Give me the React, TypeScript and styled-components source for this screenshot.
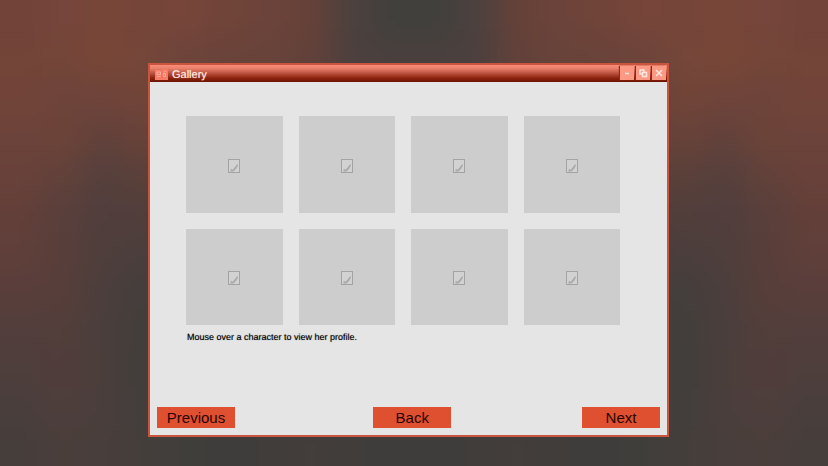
import React from "react";
import styled, { createGlobalStyle } from "styled-components";

const GlobalStyle = createGlobalStyle`
  *, *::before, *::after { box-sizing: border-box; }
  body {
    margin: 0;
    background: #453e3b;
    font-family: "Liberation Sans", Arial, sans-serif;
    text-rendering: geometricPrecision;
  }
`;

const Desktop = styled.div`
  position: relative;
  display: flex;
  flex-direction: column;
  min-height: 100vh;
  padding: 63px 159px 29px 148px;
  overflow: hidden;

  @media (max-width: 640px) {
    padding: 24px 16px;
  }
`;

const Backdrop = styled.svg`
  position: absolute;
  inset: 0;
  width: 100%;
  height: 100%;
`;

const Window = styled.main`
  position: relative;
  display: flex;
  flex: 1;
  flex-direction: column;
  border: 2px solid #c9553f;
  background: #e5e5e5;
`;

const TitleBar = styled.header`
  display: flex;
  align-items: center;
  gap: 4px;
  height: 17px;
  padding: 0 1px 1px 5px;
  background: linear-gradient(#f98d79 0%, #ea7f6b 20%, #b9503d 50%, #8f2611 75%, #6b1200 100%);
`;

const Title = styled.h1`
  flex: 1;
  margin: 0;
  padding-top: 3px;
  color: #ffe9e4;
  font-size: 11px;
  font-weight: 400;
  line-height: 14px;
  text-shadow: 0 0 1px rgba(255, 225, 218, 0.7);
`;

const WindowControls = styled.div`
  display: flex;
  gap: 2px;
`;

const ControlButton = styled.button`
  display: grid;
  place-items: center;
  width: 14px;
  height: 14px;
  padding: 0;
  border: 0;
  background: #fb9985;
  box-shadow: -1px 0 1px #8c2a18;
  color: #ffe6df;
  cursor: pointer;
`;

const Content = styled.div`
  display: flex;
  flex: 1;
  flex-direction: column;
  justify-content: space-between;
  gap: 16px;
  padding: 34px 7px 7px;
`;

const Gallery = styled.section`
  padding: 0 40px 0 29px;
`;

const TileGrid = styled.ul`
  display: grid;
  grid-template-columns: repeat(4, 1fr);
  gap: 16px;
  margin: 0;
  padding: 0;
  list-style: none;
`;

const Tile = styled.button`
  display: grid;
  place-items: center;
  width: 100%;
  aspect-ratio: 1;
  padding: 3px 0 0;
  border: 0;
  background: #cdcdcd;
  color: #a3a3a3;
  cursor: pointer;
`;

const Hint = styled.p`
  margin: 6px 0 0 1px;
  color: #000;
  font-size: 9px;
  line-height: 12px;
  text-shadow: 0 0 1px rgba(0, 0, 0, 0.5);
`;

const Footer = styled.nav`
  display: grid;
  grid-template-columns: 43% 1fr auto;
`;

const NavButton = styled.button`
  width: 78px;
  height: 21px;
  padding: 0;
  border: 0;
  background: #df5030;
  color: #280400;
  font-family: inherit;
  font-size: 15px;
  line-height: 21px;
  cursor: pointer;
`;

// Left half of the backdrop, one row per band; the right half mirrors it.
const halfRows: string[][] = [
  ["#714339", "#76453b", "#784639", "#764539", "#77453a", "#704439", "#6c433a", "#654139", "#4c413e", "#41403d"],
  ["#734438", "#744539", "#784637", "#75463a", "#6d443a", "#6a433a", "#68433a", "#63413a", "#4c403e", "#4a403e"],
  ["#724439", "#6e443a", "#6f443a", "#724438", "#65423a", "#5f423b", "#5e413b", "#59403a", "#4e3e3c", "#4a3d3b"],
  ["#6c433a", "#6c4339", "#62413b", "#684239", "#5e413b", "#58403b", "#55403b", "#503e3a", "#4a3d3b", "#473c3a"],
  ["#68413a", "#62413a", "#56403c", "#5b4039", "#553f3b", "#503e3b", "#4c3d3b", "#4a3d3b", "#463c3a", "#443c3a"],
  ["#633f39", "#593f3b", "#503e3d", "#523e3b", "#4b3e3c", "#483d3b", "#463d3b", "#443d3b", "#433c3a", "#423c3a"],
  ["#603f3a", "#583e3a", "#4e3e3c", "#4b3e3c", "#483d3b", "#453d3b", "#433d3b", "#423d3b", "#413c3a", "#403c3a"],
  ["#593e3b", "#573e3a", "#4b3e3c", "#443e3c", "#423e3b", "#413d3b", "#403d3b", "#403d3b", "#403c3a", "#3f3c3a"],
  ["#523e3c", "#523e3b", "#4a3e3c", "#423e3b", "#403e3b", "#403d3b", "#403d3b", "#3f3d3b", "#3f3c3a", "#3e3c3a"],
  ["#4e3e3c", "#503d3b", "#4a3e3b", "#413e3b", "#403e3b", "#403d3b", "#403d3b", "#3f3d3b", "#3f3c3a", "#3e3c3a"],
  ["#493e3c", "#4e3e3c", "#4a3e3c", "#423e3c", "#403e3b", "#403d3b", "#403d3b", "#3f3d3b", "#3f3c3b", "#3e3c3b"],
  ["#463e3b", "#4a3e3b", "#483e3b", "#443e3b", "#403e3b", "#3e3d3c", "#403d3b", "#433d3b", "#403d3b", "#3e3d3c"],
];

function Mosaic() {
  return (
    <Backdrop viewBox="0 0 20 12" preserveAspectRatio="none" aria-hidden="true">
      <defs>
        <filter id="soften" colorInterpolationFilters="sRGB">
          <feGaussianBlur stdDeviation="0.35" />
        </filter>
      </defs>
      <g filter="url(#soften)">
        {halfRows.map((half, row) => {
          const cells = [half[0], ...half, ...[...half].reverse(), half[0]];
          const top = row === 0 ? -1 : row;
          const height = row === 0 || row === halfRows.length - 1 ? 2 : 1.02;
          return cells.map((fill, i) => (
            <rect key={`${row}-${i}`} x={i - 1} y={top} width={1.02} height={height} fill={fill} />
          ));
        })}
      </g>
    </Backdrop>
  );
}

function GalleryIcon() {
  return (
    <svg width="13" height="13" viewBox="0 0 13 13" aria-hidden="true">
      <path d="M0 3h8l1-1h3l1 1v10H0z" fill="#f87c68" />
      <path d="M2 5h3.500v2.500H2zM2 9.500h3.500M8 6.500h2.500v3H8zM11 4L9 5" fill="none" stroke="#ffab99" />
      <path d="M7 4v8" stroke="#ee6a55" />
    </svg>
  );
}

function PictureIcon() {
  return (
    <svg width="12" height="14" viewBox="0 0 12 14" aria-hidden="true">
      <rect x="0.5" y="0.5" width="11" height="13" fill="#d2d2d2" stroke="currentColor" />
      <path d="M2 12.500l1-3 2 1.500 5-6-1 4-3.500 3.500z" fill="#b0b0b0" />
      <path d="M4 12.500L9.500 5.500" stroke="currentColor" />
    </svg>
  );
}

const controls = [
  { label: "Minimize", icon: <path d="M3 5.500h4" /> },
  { label: "Restore", icon: <path d="M1.500 2h4.500v2M2 2v4h2M4.500 4.500h4v4h-4z" /> },
  { label: "Close", icon: <path d="M2 2l6 6M8 2L2 8" /> },
];

export default function App() {
  return (
    <>
      <GlobalStyle />
      <Desktop>
        <Mosaic />
        <Window>
          <TitleBar>
            <GalleryIcon />
            <Title>Gallery</Title>
            <WindowControls>
              {controls.map(({ label, icon }) => (
                <ControlButton key={label} type="button" aria-label={label}>
                  <svg width="10" height="10" viewBox="0 0 10 10" fill="none" stroke="currentColor" strokeWidth="1.5" aria-hidden="true">
                    {icon}
                  </svg>
                </ControlButton>
              ))}
            </WindowControls>
          </TitleBar>
          <Content>
            <Gallery>
              <TileGrid>
                {Array.from({ length: 8 }, (_, i) => (
                  <li key={i}>
                    <Tile type="button" aria-label={`Character ${i + 1}`}>
                      <PictureIcon />
                    </Tile>
                  </li>
                ))}
              </TileGrid>
              <Hint>Mouse over a character to view her profile.</Hint>
            </Gallery>
            <Footer aria-label="Gallery pages">
              <NavButton type="button">Previous</NavButton>
              <NavButton type="button">Back</NavButton>
              <NavButton type="button">Next</NavButton>
            </Footer>
          </Content>
        </Window>
      </Desktop>
    </>
  );
}
